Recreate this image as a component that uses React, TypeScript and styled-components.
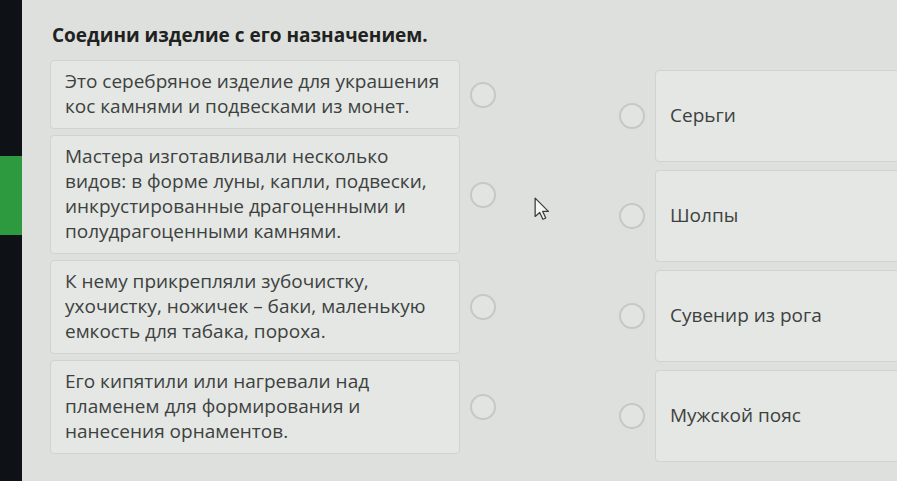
import React from "react";
import styled, { createGlobalStyle } from "styled-components";

const GlobalStyle = createGlobalStyle`
  html, body {
    margin: 0;
    padding: 0;
    background: #dde0dd;
    overflow: hidden;
  }
  #root {
    width: 897px;
    height: 481px;
  }
`;

const Page = styled.div`
  display: flex;
  width: 897px;
  height: 481px;
  overflow: hidden;
  background: #dde0dd;
  font-family: "Open Sans", "Noto Sans", sans-serif;
  position: relative;
`;

const Sidebar = styled.aside`
  width: 22px;
  flex: none;
  background: #0e1217;
  padding-top: 156px;
  box-sizing: border-box;
`;

const GreenTab = styled.div`
  height: 79px;
  background: #2e9a3f;
`;

const Main = styled.main`
  flex: 1;
  padding: 22px 0 0 28px;
  min-width: 0;
`;

const Title = styled.h1`
  margin: 0 0 0 2px;
  font-size: 19px;
  font-weight: 700;
  color: #1f2221;
  line-height: 26px;
`;

const Board = styled.div`
  display: flex;
  align-items: flex-start;
  margin-top: 12px;
`;

const LeftColumn = styled.div`
  display: flex;
  flex-direction: column;
  gap: 6px;
  width: 446px;
  flex: none;
`;

const RightColumn = styled.div`
  display: flex;
  flex-direction: column;
  gap: 8px;
  margin-left: 123px;
  margin-top: 10px;
  flex: none;
`;

const Row = styled.div`
  display: flex;
  align-items: center;
  gap: 10px;
`;

const Card = styled.div<{ $width: number; $height?: number }>`
  box-sizing: border-box;
  width: ${(p) => p.$width}px;
  ${(p) => (p.$height ? `height: ${p.$height}px;` : "")}
  display: flex;
  align-items: center;
  padding: 8px 14px 9px;
  background: #e4e7e4;
  border: 1px solid #d0d4d1;
  border-radius: 4px;
  color: #3d4140;
  font-size: 19px;
  line-height: 25px;
`;

const Radio = styled.span`
  box-sizing: border-box;
  width: 26px;
  height: 26px;
  flex: none;
  border-radius: 50%;
  border: 2px solid #c5c9c6;
  background: #e1e4e1;
`;

const Cursor = styled.svg`
  position: absolute;
  left: 534px;
  top: 197px;
  width: 16px;
  height: 24px;
`;

const leftItems = [
  "Это серебряное изделие для украшения кос камнями и подвесками из монет.",
  "Мастера изготавливали несколько видов: в форме луны, капли, подвески, инкрустированные драгоценными и полудрагоценными камнями.",
  "К нему прикрепляли зубочистку, ухочистку, ножичек – баки, маленькую емкость для табака, пороха.",
  "Его кипятили или нагревали над пламенем для формирования и нанесения орнаментов.",
];

const rightItems = ["Серьги", "Шолпы", "Сувенир из рога", "Мужской пояс"];

export default function App() {
  return (
    <>
      <GlobalStyle />
      <Page>
        <Sidebar>
          <GreenTab />
        </Sidebar>
        <Main>
          <Title>Соедини изделие с его назначением.</Title>
          <Board>
            <LeftColumn>
              {leftItems.map((t) => (
                <Row key={t}>
                  <Card $width={410}>{t}</Card>
                  <Radio />
                </Row>
              ))}
            </LeftColumn>
            <RightColumn>
              {rightItems.map((t) => (
                <Row key={t}>
                  <Radio />
                  <Card $width={270} $height={92}>
                    {t}
                  </Card>
                </Row>
              ))}
            </RightColumn>
          </Board>
        </Main>
        <Cursor viewBox="0 0 14 21">
          <path
            d="M1 1 L1 17 L5 13.5 L7.8 19.5 L10.3 18.4 L7.6 12.6 L12.6 12.6 Z"
            fill="#f4f6f4"
            stroke="#3a3d3c"
            strokeWidth="1.1"
            strokeLinejoin="round"
          />
        </Cursor>
      </Page>
    </>
  );
}
